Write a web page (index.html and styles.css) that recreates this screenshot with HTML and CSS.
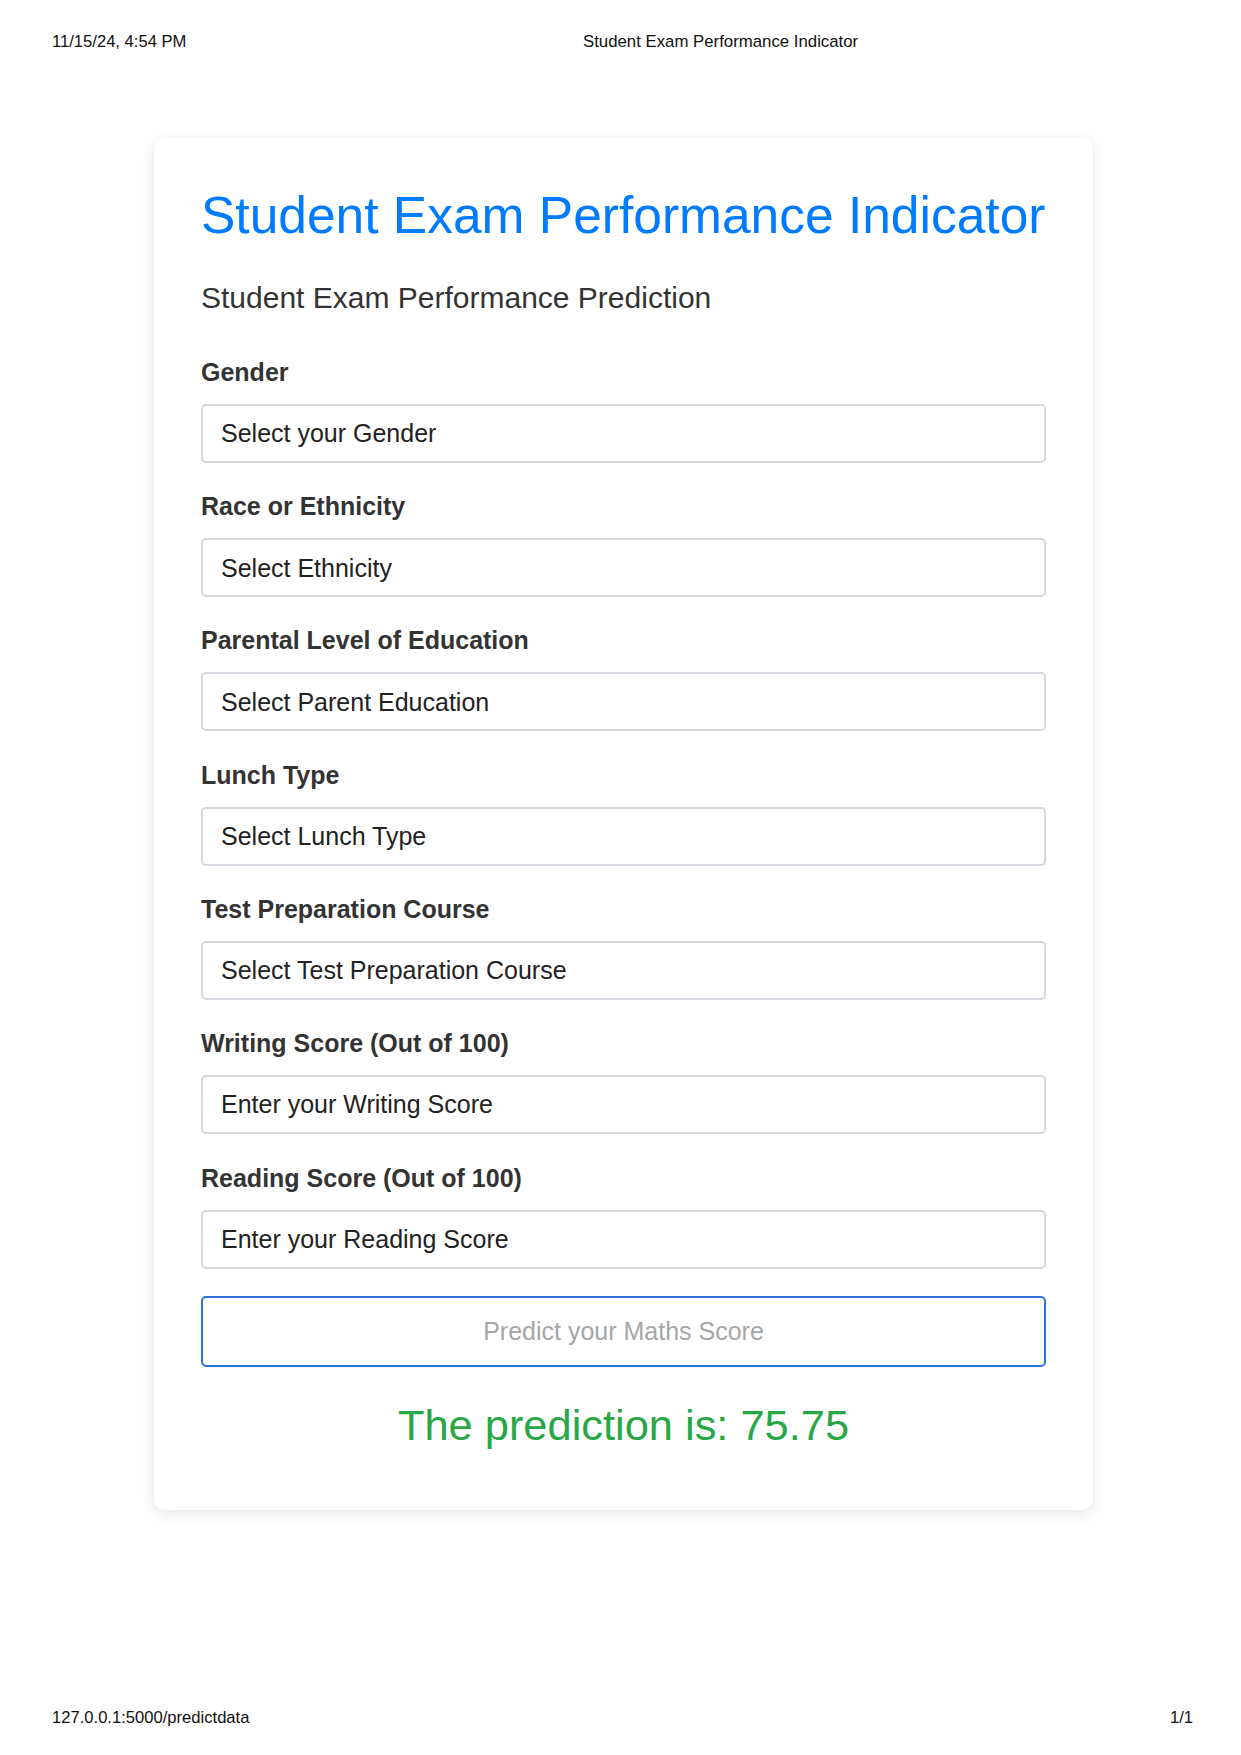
FILE: index.html
```html
<!DOCTYPE html>
<html lang="en">
<head>
<meta charset="utf-8">
<title>Student Exam Performance Indicator</title>
<link rel="stylesheet" href="styles.css">
</head>
<body>
<div class="page">
  <header class="print-header">
    <span class="print-date">11/15/24, 4:54 PM</span>
    <span class="print-title">Student Exam Performance Indicator</span>
  </header>

  <main class="card">
    <h1 class="title">Student Exam Performance Indicator</h1>
    <h2 class="subtitle">Student Exam Performance Prediction</h2>
    <form class="form">
      <div class="field">
        <label class="label" for="gender">Gender</label>
        <select class="control" id="gender"><option>Select your Gender</option></select>
      </div>
      <div class="field">
        <label class="label" for="eth">Race or Ethnicity</label>
        <select class="control" id="eth"><option>Select Ethnicity</option></select>
      </div>
      <div class="field">
        <label class="label" for="pe">Parental Level of Education</label>
        <select class="control" id="pe"><option>Select Parent Education</option></select>
      </div>
      <div class="field">
        <label class="label" for="lunch">Lunch Type</label>
        <select class="control" id="lunch"><option>Select Lunch Type</option></select>
      </div>
      <div class="field">
        <label class="label" for="tpc">Test Preparation Course</label>
        <select class="control" id="tpc"><option>Select Test Preparation Course</option></select>
      </div>
      <div class="field">
        <label class="label" for="ws">Writing Score (Out of 100)</label>
        <input class="control" id="ws" type="text" placeholder="Enter your Writing Score">
      </div>
      <div class="field">
        <label class="label" for="rs">Reading Score (Out of 100)</label>
        <input class="control" id="rs" type="text" placeholder="Enter your Reading Score">
      </div>
      <button class="submit" type="button">Predict your Maths Score</button>
    </form>
    <p class="result">The prediction is: 75.75</p>
  </main>

  <footer class="print-footer">
    <span>127.0.0.1:5000/predictdata</span>
    <span>1/1</span>
  </footer>
</div>
</body>
</html>
```

FILE: styles.css
```css
html, body {
  margin: 0;
  padding: 0;
  background: #ffffff;
}

body {
  font-family: "Liberation Sans", Arial, sans-serif;
  color: #333333;
}

.page {
  min-height: 1755px;
  display: flex;
  flex-direction: column;
  box-sizing: border-box;
}

.print-header {
  display: grid;
  grid-template-columns: 531px 1fr;
  padding: 32px 0 0 52px;
  font-size: 16.6px;
  line-height: 20px;
  color: #111111;
}

.print-title {
  font-size: 16.8px;
}

.print-footer {
  margin-top: auto;
  display: flex;
  justify-content: space-between;
  padding: 0 48px 27px 52px;
  font-size: 16.6px;
  line-height: 20px;
  color: #111111;
}

.card {
  margin: 86px 0 0 154px;
  width: 939px;
  box-sizing: border-box;
  padding: 47px 47px 48px 47px;
  background: #ffffff;
  border-radius: 10px;
  box-shadow: 0 4px 16px rgba(0, 0, 0, 0.09), 0 0 4px rgba(0, 0, 0, 0.03);
}

.title {
  margin: 0 0 33px 0;
  font-size: 51.5px;
  line-height: 1.2;
  font-weight: 400;
  color: #007bff;
}

.subtitle {
  margin: 0 0 41px 0;
  font-size: 30px;
  line-height: 1.2;
  font-weight: 400;
  color: #333333;
}

.form {
  display: flex;
  flex-direction: column;
}

.field {
  display: flex;
  flex-direction: column;
  margin-bottom: 28.3px;
}

.label {
  font-size: 25px;
  line-height: 30px;
  font-weight: 700;
  color: #333333;
  margin-bottom: 17px;
}

.control {
  -webkit-appearance: none;
  appearance: none;
  box-sizing: border-box;
  width: 100%;
  height: 59px;
  margin: 0;
  padding: 0 18px;
  border: 2px solid #d4d9df;
  border-radius: 5px;
  background: #ffffff;
  font-family: "Liberation Sans", Arial, sans-serif;
  font-size: 25px;
  color: #222222;
  outline: none;
}

.control::placeholder {
  color: #222222;
  opacity: 1;
}

.submit {
  margin-top: -1.3px;
  box-sizing: border-box;
  width: 100%;
  height: 71px;
  border: 2px solid #2d72d9;
  border-radius: 5px;
  background: #ffffff;
  font-family: "Liberation Sans", Arial, sans-serif;
  font-size: 25px;
  color: #a6a6a6;
  cursor: pointer;
}

.result {
  margin: 32px 0 11px 0;
  text-align: center;
  font-size: 43.4px;
  line-height: 1.2;
  color: #28a745;
}
```
